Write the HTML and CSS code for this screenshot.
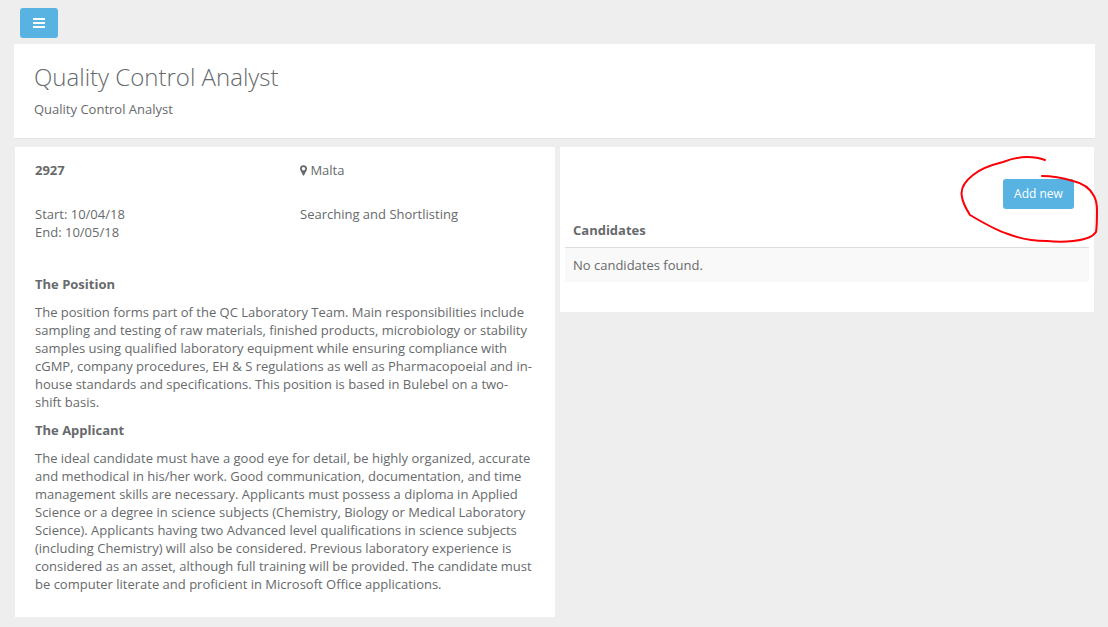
FILE: index.html
```html
<!DOCTYPE html>
<html lang="en">
<head>
<meta charset="utf-8">
<meta name="viewport" content="width=device-width, initial-scale=1">
<title>Quality Control Analyst</title>
<link rel="stylesheet" href="styles.css">
</head>
<body>
<nav class="topbar">
  <button class="btn menu-btn" type="button" aria-label="Toggle menu">
    <svg class="menu-icon" viewBox="0 0 12 10" aria-hidden="true"><path d="M0 0h12v2H0zM0 4h12v2H0zM0 8h12v2H0z"/></svg>
  </button>
</nav>
<header class="page-heading">
  <h1 class="title">Quality Control Analyst</h1>
  <p class="subtitle">Quality Control Analyst</p>
</header>
<main class="columns">
  <section class="panel details">
    <div class="facts">
      <strong>2927</strong>
      <span><svg class="pin-icon" viewBox="0 0 8 12" aria-hidden="true"><path fill-rule="evenodd" d="M4 0a4 4 0 0 1 4 4c0 .7-.1 1.200-.4 1.700L4.700 11.500c-.3.600-1.100.600-1.400 0L.4 5.700C.1 5.200 0 4.700 0 4a4 4 0 0 1 4-4zm0 2a2 2 0 1 0 0 4 2 2 0 0 0 0-4z"/></svg> Malta</span>
      <span>Start: 10/04/18<br>End: 10/05/18</span>
      <span>Searching and Shortlisting</span>
    </div>
    <h2 class="section-title">The Position</h2>
    <p class="text">The position forms part of the QC Laboratory Team. Main responsibilities include sampling and testing of raw materials, finished products, microbiology or stability samples using qualified laboratory equipment while ensuring compliance with cGMP, company procedures, EH &amp; S regulations as well as Pharmacopoeial and in-house standards and specifications. This position is based in Bulebel on a two-shift basis.</p>
    <h2 class="section-title">The Applicant</h2>
    <p class="text">The ideal candidate must have a good eye for detail, be highly organized, accurate and methodical in his/her work. Good communication, documentation, and time management skills are necessary. Applicants must possess a diploma in Applied Science or a degree in science subjects (Chemistry, Biology or Medical Laboratory Science). Applicants having two Advanced level qualifications in science subjects (including Chemistry) will also be considered. Previous laboratory experience is considered as an asset, although full training will be provided. The candidate must be computer literate and proficient in Microsoft Office applications.</p>
  </section>
  <section class="panel candidates">
    <div class="actions">
      <div class="marked">
        <button class="btn add-btn" type="button">Add new</button>
        <svg class="mark" viewBox="0 0 145 95" aria-hidden="true"><path d="M90 10 C85 8 79 7 72 7 C63 7 56 9 48 12 C36 15 25 19 18 25 C9 32 5 39 7 47 C8 54 12 60 15 65 C27 72 40 80 53 84 C66 89 79 91 92 91 C101 92 110 92 118 91 C128 90 137 88 141 82 C142 77 142 68 142 60 C142 54 141 50 139 46 C135 38 127 33 118 31 C108 28 100 26 87 26"/></svg>
      </div>
    </div>
    <table class="table">
      <thead><tr><th scope="col">Candidates</th></tr></thead>
      <tbody><tr><td>No candidates found.</td></tr></tbody>
    </table>
  </section>
</main>
</body>
</html>
```
FILE: styles.css
```css
* { box-sizing: border-box; }

body {
  margin: 0;
  padding: 8px 14px 10px;
  background: #eee;
  color: #676a6c;
  font: 13px/18px "Open Sans", "Noto Sans", sans-serif;
}

h1, h2, p { margin: 0; }

.topbar {
  display: flex;
  padding: 0 6px;
  margin-bottom: 6px;
}

.btn {
  display: flex;
  align-items: center;
  justify-content: center;
  height: 30px;
  padding: 0 11px;
  border: 0;
  border-radius: 3px;
  background: #58b3e3;
  color: #fff;
  font: 500 12px/18px "Open Sans", "Noto Sans", sans-serif;
  white-space: nowrap;
  cursor: pointer;
}

.menu-btn { width: 38px; }

.menu-icon {
  width: 12px;
  height: 10px;
  fill: #fff;
}

.page-heading {
  margin-right: -1px;
  padding: 20px;
  background: #fff;
  box-shadow: 0 1px 0 #e4e4e4;
}

.title {
  margin-bottom: 10px;
  font-size: 24px;
  line-height: 26px;
  font-weight: 300;
}

.columns {
  display: grid;
  grid-template-columns: minmax(0, 540fr) minmax(0, 534fr);
  align-items: start;
  gap: 5px;
  margin: 9px 0 0 1px;
}

.panel { background: #fff; }

.details { padding: 14px 20px 24px; }

.facts {
  display: grid;
  grid-template-columns: 1fr 1fr;
  gap: 26px 30px;
  margin-bottom: 34px;
}

.pin-icon {
  width: 7px;
  height: 11px;
  vertical-align: -1px;
  fill: #676a6c;
}

.section-title {
  margin: 10px 0;
  font-size: 13px;
  line-height: 18px;
  font-weight: 700;
}

.text { padding-right: 2px; }

.candidates { padding: 32px 5px 30px; }

.actions {
  display: flex;
  justify-content: flex-end;
  padding: 0 15px 4px;
}

.marked { position: relative; }

.add-btn { min-width: 71px; }

.mark {
  position: absolute;
  left: -48px;
  top: -29px;
  width: 145px;
  height: 95px;
  fill: none;
  stroke: #fb0007;
  stroke-width: 2;
  stroke-linecap: round;
  stroke-linejoin: round;
  pointer-events: none;
}

.table {
  width: 100%;
  border-collapse: separate;
  border-spacing: 0;
}

.table th,
.table td {
  padding: 8px;
  text-align: left;
}

.table th { border-bottom: 1px solid #ddd; }

.table td { background: #f9f9f9; }
```
